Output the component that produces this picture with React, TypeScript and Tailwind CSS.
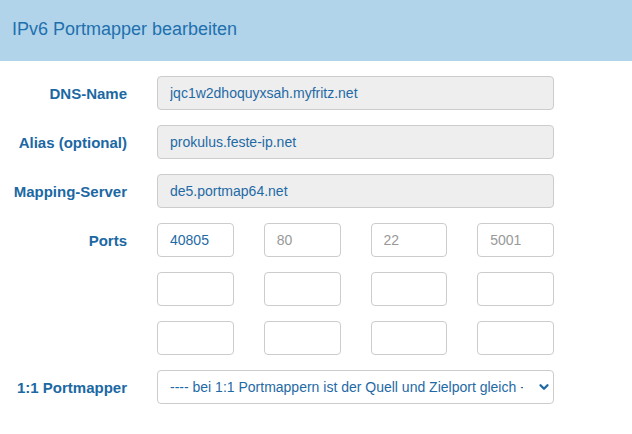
import { ChevronDown } from "lucide-react"

const labelCls = "w-[127px] shrink-0 translate-y-px text-right text-[15px] font-bold text-[#1b68a3]"
const fieldCls =
  "h-[34px] w-full rounded-[4px] border border-[#cccccc] px-3 text-[14px] text-[#1f6aa5] outline-none placeholder:text-[#999999]"

function Row({ label, children }: { label: string; children: React.ReactNode }) {
  return (
    <div className="flex items-start gap-[30px]">
      <div className={`${labelCls} leading-[34px]`}>{label}</div>
      <div className="w-[397px]">{children}</div>
    </div>
  )
}

export default function App() {
  const ports = [
    ["40805", "80", "22", "5001"],
    ["", "", "", ""],
    ["", "", "", ""],
  ]

  return (
    <div className="w-[632px] h-[434px] bg-white font-['Liberation_Sans',Arial,sans-serif]">
      {/* header */}
      <div className="h-[61px] bg-[#b2d4ea] px-3 pt-[19px]">
        <h1 className="text-[18px] leading-[20px] text-[#2170ae]">IPv6 Portmapper bearbeiten</h1>
      </div>

      <div className="flex flex-col gap-[15px] pt-[15px]">
        <Row label="DNS-Name">
          <input readOnly defaultValue="jqc1w2dhoquyxsah.myfritz.net" className={`${fieldCls} bg-[#eeeeee]`} />
        </Row>
        <Row label="Alias (optional)">
          <input readOnly defaultValue="prokulus.feste-ip.net" className={`${fieldCls} bg-[#eeeeee]`} />
        </Row>
        <Row label="Mapping-Server">
          <input readOnly defaultValue="de5.portmap64.net" className={`${fieldCls} bg-[#eeeeee]`} />
        </Row>
        <Row label="Ports">
          <div className="grid grid-cols-4 gap-x-[30px] gap-y-[15px]">
            {ports.flat().map((v, i) => (
              <input
                key={i}
                readOnly
                defaultValue={i === 0 ? v : ""}
                placeholder={i === 0 ? "" : v}
                className={`${fieldCls} bg-white`}
              />
            ))}
          </div>
        </Row>
        <Row label="1:1 Portmapper">
          <div className="relative">
            <select className={`${fieldCls} appearance-none bg-white pr-[30px]`}>
              <option>---- bei 1:1 Portmappern ist der Quell und Zielport gleich ----</option>
            </select>
            <ChevronDown
              size={14}
              strokeWidth={4}
              className="pointer-events-none absolute right-[3px] top-[10px] text-[#1f6aa5]"
            />
          </div>
        </Row>
      </div>
    </div>
  )
}
